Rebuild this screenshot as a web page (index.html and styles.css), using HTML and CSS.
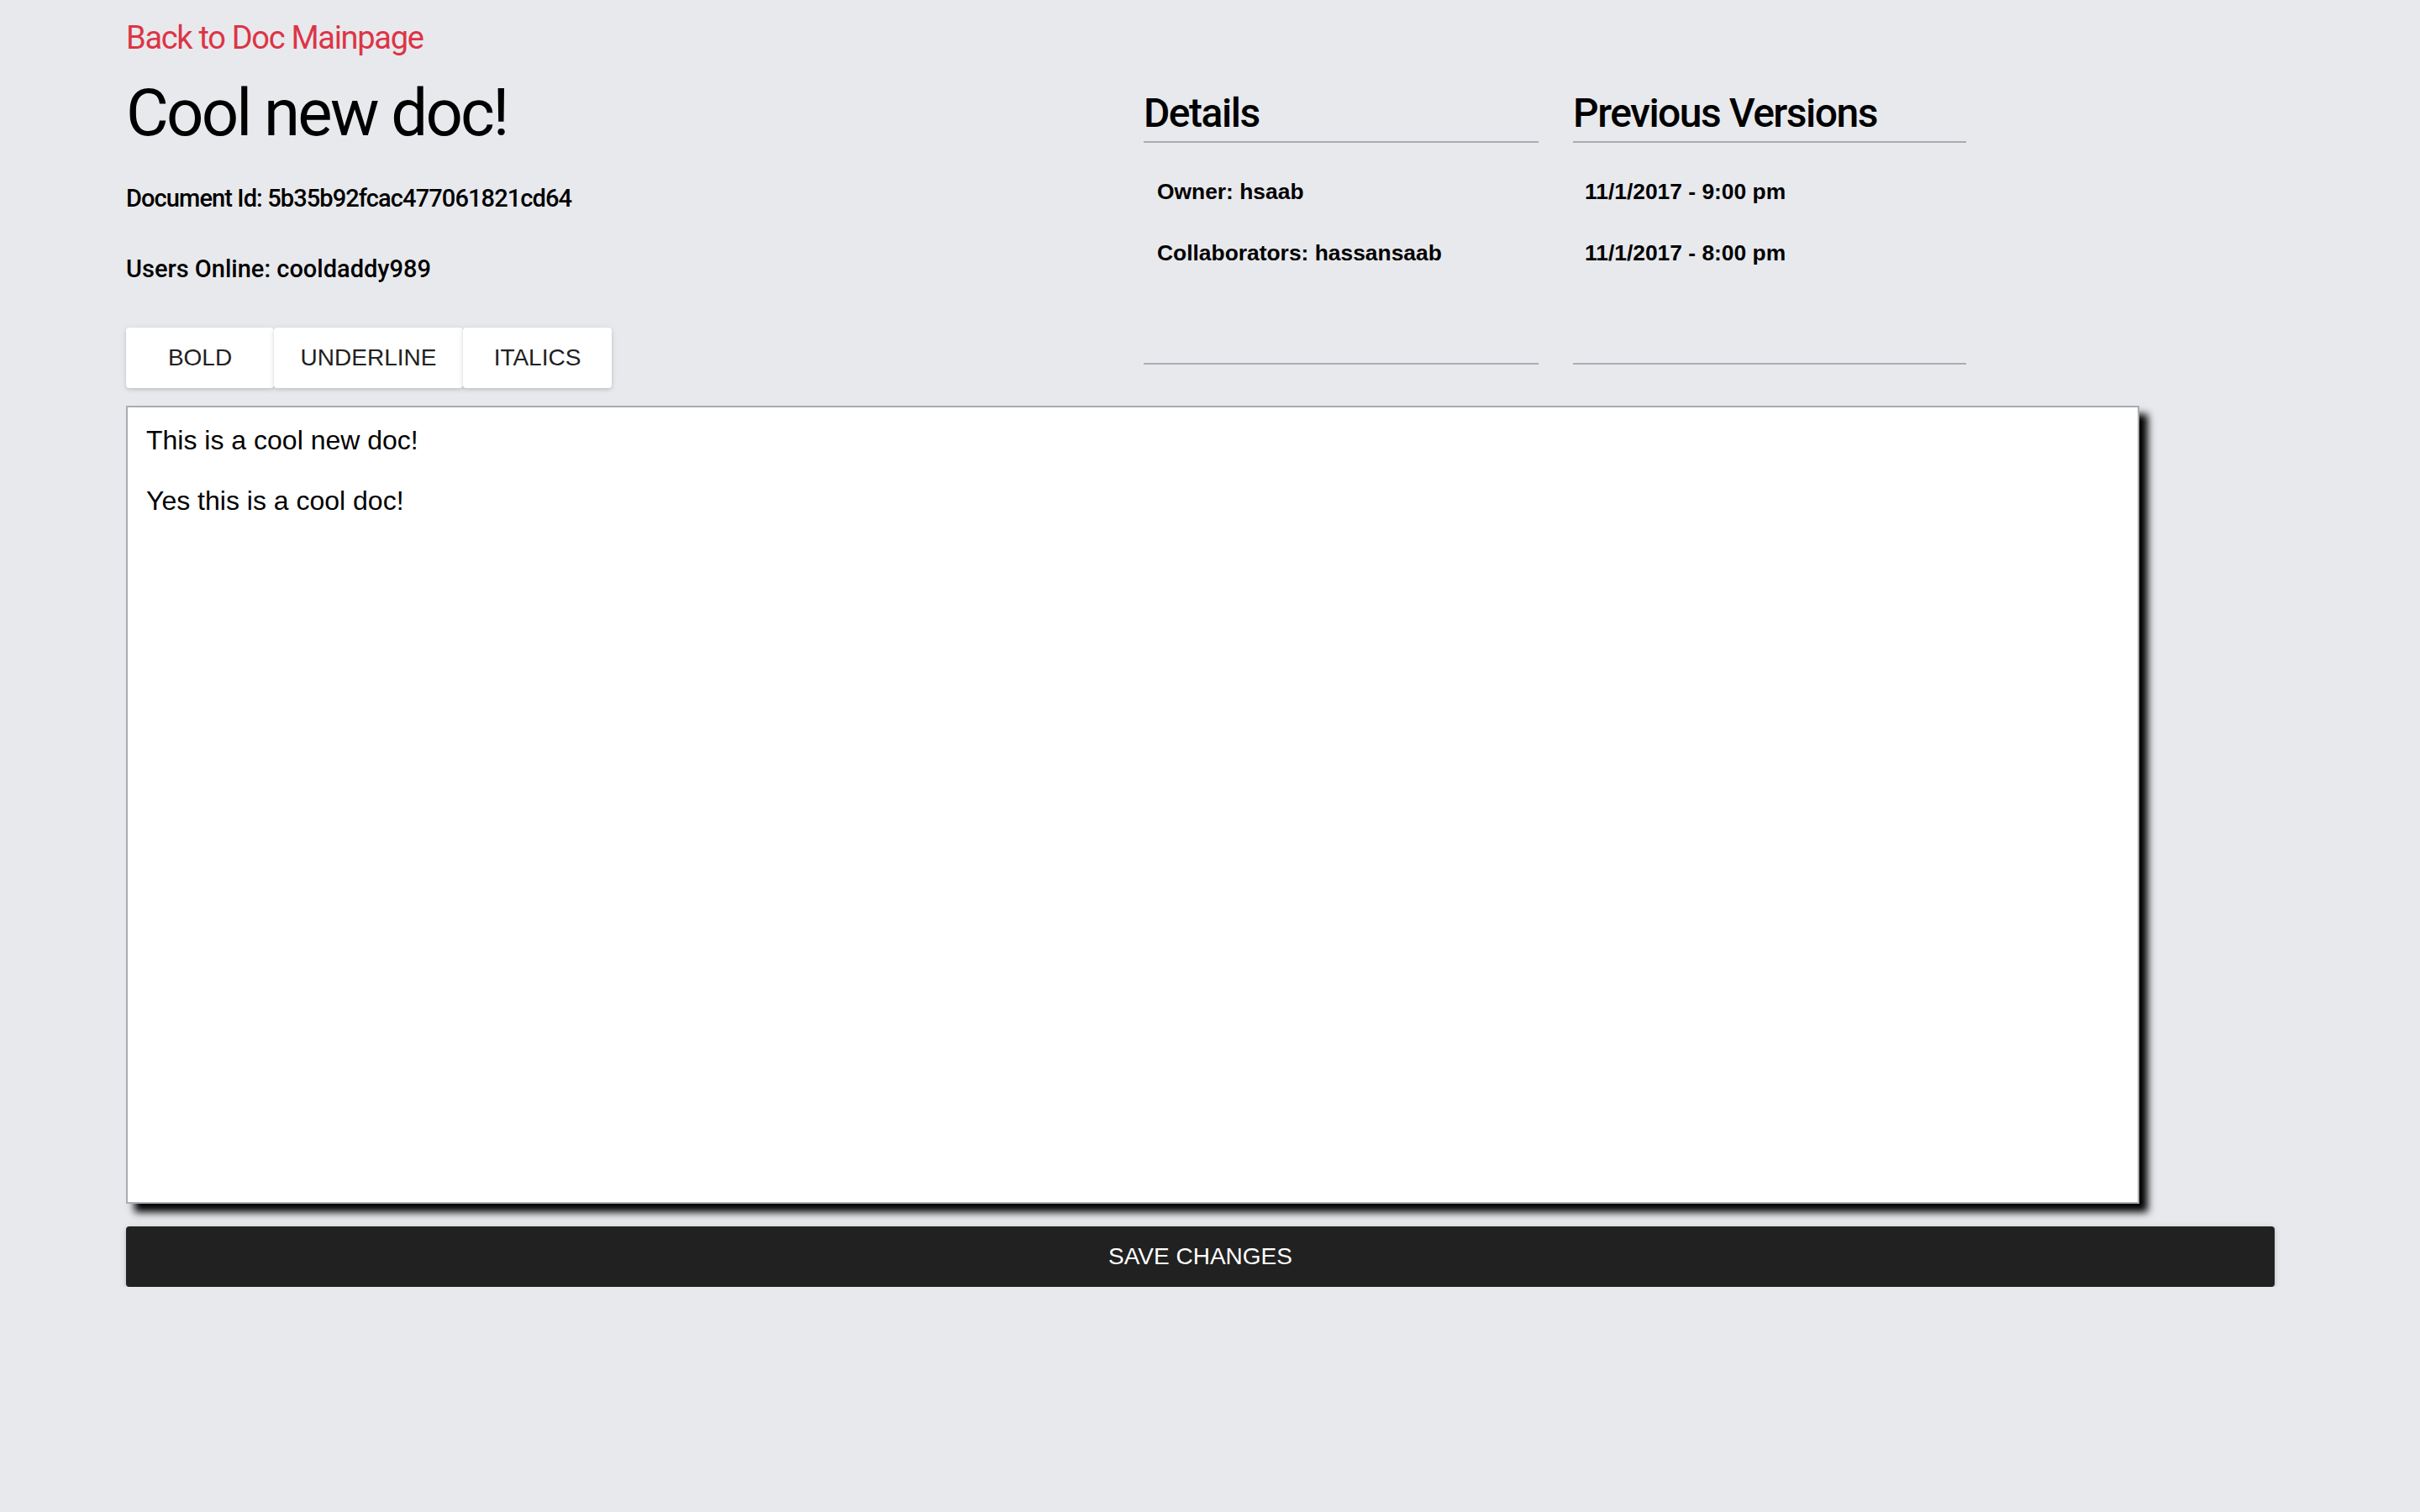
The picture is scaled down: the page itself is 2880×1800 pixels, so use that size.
FILE: index.html
```html
<!DOCTYPE html>
<html lang="en">
<head>
<meta charset="utf-8">
<title>Cool new doc!</title>
<link rel="stylesheet" href="styles.css">
</head>
<body>
<div class="page">
  <div class="back-row"><a class="back-link" href="#">Back to Doc Mainpage</a></div>
  <div class="header">
    <div class="doc-info">
      <h1 class="doc-title">Cool new doc!</h1>
      <p class="meta meta-id">Document Id: 5b35b92fcac477061821cd64</p>
      <p class="meta meta-users">Users Online: cooldaddy989</p>
      <div class="toolbar">
        <button class="tool tool-bold">BOLD</button>
        <button class="tool tool-underline">UNDERLINE</button>
        <button class="tool tool-italics">ITALICS</button>
      </div>
    </div>
    <section class="panel panel-details">
      <h2 class="panel-title">Details</h2>
      <ul class="panel-list">
        <li>Owner: hsaab</li>
        <li>Collaborators: hassansaab</li>
      </ul>
    </section>
    <section class="panel panel-versions">
      <h2 class="panel-title">Previous Versions</h2>
      <ul class="panel-list">
        <li>11/1/2017 - 9:00 pm</li>
        <li>11/1/2017 - 8:00 pm</li>
      </ul>
    </section>
  </div>
  <div class="editor" contenteditable="true">
    <p>This is a cool new doc!</p>
    <p>Yes this is a cool doc!</p>
  </div>
  <button class="save">SAVE CHANGES</button>
</div>
</body>
</html>
```
FILE: styles.css
```css
html, body {
  margin: 0;
  padding: 0;
  background: #e8e9ed;
}

body {
  font-family: "Liberation Sans", Arial, sans-serif;
  color: #000;
}

.page {
  padding: 21px 0 0 150px;
}

.back-row {
  height: 48px;
  line-height: 48px;
}

.back-link {
  font-family: Roboto, "Noto Sans", sans-serif;
  font-size: 38px;
  font-weight: 400;
  letter-spacing: -1.3px;
  color: #dc3545;
  text-decoration: none;
}

.header {
  display: flex;
  align-items: flex-start;
}

.doc-info {
  width: 1211px;
  flex: none;
}

.doc-title {
  margin: 20px 0 0;
  font-family: Roboto, "Noto Sans", sans-serif;
  font-size: 78px;
  font-weight: 400;
  letter-spacing: -2.8px;
  line-height: 92px;
  height: 92px;
}

.meta {
  margin: 0;
  font-family: Roboto, "Noto Sans", sans-serif;
  font-size: 29px;
  font-weight: 500;
  letter-spacing: -0.5px;
  line-height: 40px;
}

.meta-id {
  margin-top: 35px;
  letter-spacing: -0.9px;
}

.meta-users {
  margin-top: 44px;
  letter-spacing: 0;
}

.toolbar {
  display: flex;
  margin-top: 50px;
}

.tool {
  height: 72px;
  padding: 0;
  border: none;
  border-radius: 4px;
  background: #fff;
  color: #212121;
  font-family: "Liberation Sans", Arial, sans-serif;
  font-size: 28px;
  line-height: 72px;
  box-shadow: 0 2px 4px rgba(0, 0, 0, 0.12), 0 1px 8px rgba(0, 0, 0, 0.07);
  cursor: pointer;
}

.tool-bold { width: 176px; }
.tool-underline { width: 225px; }
.tool-italics { width: 177px; }

.panel {
  flex: none;
  padding-top: 36px;
}

.panel-details { width: 470px; }
.panel-versions { width: 468px; margin-left: 41px; }

.panel-title {
  margin: 0;
  padding-bottom: 3px;
  border-bottom: 2px solid #a9adb3;
  font-family: Roboto, "Noto Sans", sans-serif;
  font-size: 48px;
  font-weight: 500;
  letter-spacing: -1.5px;
  line-height: 60px;
  white-space: nowrap;
}

.panel-list {
  list-style: none;
  margin: 0;
  padding: 38px 0 0 16px;
  height: 224px;
  border-bottom: 2px solid #a9adb3;
  display: flex;
  flex-direction: column;
  gap: 33px;
}

.panel-list li {
  font-family: "Liberation Sans", Arial, sans-serif;
  font-size: 26.4px;
  font-weight: 700;
  line-height: 40px;
}

.panel-versions .panel-list {
  padding-left: 14px;
}

.editor {
  box-sizing: border-box;
  width: 2396px;
  height: 950px;
  margin-top: 21px;
  padding: 18px 22px;
  background: #fff;
  border: 2px solid #a9adb3;
  box-shadow: 10px 10px 9px #000;
  outline: none;
}

.editor p {
  margin: 0 0 30px;
  font-family: "Liberation Sans", Arial, sans-serif;
  font-size: 32px;
  line-height: 42px;
}

.save {
  display: block;
  width: 2557px;
  height: 72px;
  margin-top: 27px;
  padding: 0;
  border: none;
  border-radius: 4px;
  background: #212121;
  color: #fff;
  font-family: "Liberation Sans", Arial, sans-serif;
  font-size: 28px;
  line-height: 72px;
  box-shadow: 0 2px 4px rgba(0, 0, 0, 0.14), 0 1px 8px rgba(0, 0, 0, 0.1);
  cursor: pointer;
}
```
